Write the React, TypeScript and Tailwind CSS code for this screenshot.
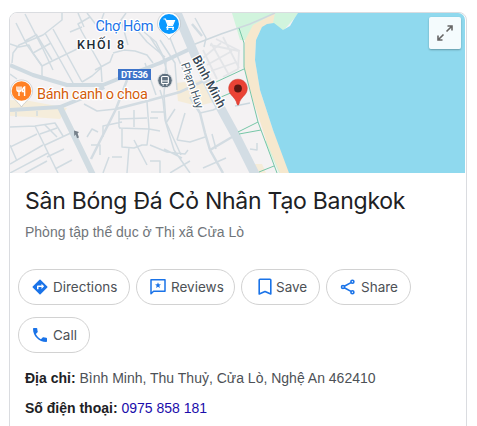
import type { ReactNode } from "react";

const minorRoads = [
  // north west
  "M16 23L27 45L42 66L42 78M25 14L43 49L53 70M36 34L52 60M45 33L73 83M53 29L82 82",
  "M62 13L62 20L43 35L19 45L13 53L12 63M10 44L19 47L29 45L33 53L42 66M33 53L51 43M42 66L77 49M25 41L36 35M10 74L17 79",
  "M90 17L78 24L82 32L101 66L102 82M70 32L82 27M78 13L84 27M95 70L110 62L113 54M82 82L92 76L101 68M87 13L97 26",
  // centre
  "M113 53L124 50L135 51L147 55L153 63M126 13L121 20L128 45M137 30L147 42L165 57M144 32L156 42L166 62L164 95L166 122L181 155M104 13L100 24",
  "M150 37L163 57L170 83M160 40L175 63L177 90M170 38L183 70M145 63L156 95M195 18L206 38L204 47",
  // south west
  "M10 127L35 126L55 123L63 136M35 126L58 173M45 125L57 137M40 134L57 128M45 145L73 132M10 147L37 134M10 164L43 145M25 173L47 161M55 169L72 160M10 145L17 161M47 157L64 149M10 173L48 153M16 112V117M37 111V116",
  // south
  "M84 104L97 111L116 109M119 111V127L122 129V147L134 148L142 145H147L149 129L147 102M119 119L147 118M119 128L149 129L160 131M134 110V127M129 147L127 173M134 140L147 165M87 137L92 129L98 132M103 137V126L122 122M112 157H122M91 145H100V155M109 157L103 173",
  "M151 112H164M150 118H158M166 123L175 109M150 145L167 152L185 154L188 150M164 149L182 158M177 140L185 113M177 140L190 142L205 137M200 113L213 110L222 106M160 90L163 100L165 120L174 150L190 173M212 134L216 149M150 161H160V173M170 173L190 161M203 168L226 158M250 149L257 150V143",
];

const mainRoads = [
  "M127 80L116 109L91 159",
  "M116 109L151 100L180 92L210 78",
  "M190 97L200 113L205 133L210 150L223 173",
  "M210 150L232 137",
  "M192 24L202 36",
];

function RoadMap() {
  return (
    <svg
      viewBox="10 13 455 160"
      className="block h-[160px] w-[455px]"
      fontFamily="Roboto, sans-serif"
    >
      <rect x="10" y="13" width="455" height="160" fill="#f4f2f3" />

      {/* built-up areas */}
      <path d="M10 100L30 101L67 108L60 119L32 117L10 116Z" fill="#f5eddb" />
      <path d="M176 83L209 79L218 101L198 106L178 101Z" fill="#f5ecd9" />
      <path d="M253 164L262 164L266 173H256Z" fill="#f5ecd9" />

      {/* coast */}
      <path d="M232 13H299L283 31L272 24L247 40L240 40Z" fill="#d1f4dd" />
      <path d="M265 141L279 173H284L268 141Z" fill="#d1f4dd" />
      <path
        d="M275 13L253 25L245 40L244 67L253 100L267 143L280 173H291L273 130L260 90L255 60L256 40L262 27L273 23Z"
        fill="#f6e8ce"
      />
      <path
        d="M298 13H465V173H289L273 130L260 90L255 60L256 40L262 27L267 24L274 23L283 30L290 26L294 19Z"
        fill="#8fd9ee"
      />

      {/* streets */}
      <g
        fill="none"
        stroke="#d1dbe1"
        strokeWidth="1.5"
        strokeLinejoin="round"
      >
        {minorRoads.map((d) => (
          <path key={d} d={d} />
        ))}
      </g>
      <g
        fill="none"
        stroke="#d3dce2"
        strokeWidth="2.5"
        strokeLinejoin="round"
      >
        {mainRoads.map((d) => (
          <path key={d} d={d} />
        ))}
      </g>
      <path
        d="M203 58L221 43M207 65L232 51M211 71L237 62M203 50L217 79M211 43L229 75M223 37L239 68M216 39L240 51M210 45L239 51L238 69L223 77"
        fill="none"
        stroke="#e3e5e8"
        strokeWidth="1.8"
      />
      <path
        d="M190 46L221 34L250 24L275 13"
        fill="none"
        stroke="#cdd8de"
        strokeWidth="1.5"
      />
      <path
        d="M10 65L33 75L67 85H103L123 77L160 63L190 49M10 110L60 107L90 95L104 87"
        fill="none"
        stroke="#cfdae1"
        strokeWidth="4"
        strokeLinejoin="round"
      />
      <path
        d="M60 107L80 148L93 175"
        fill="none"
        stroke="#d1dce2"
        strokeWidth="6"
      />
      <path
        d="M175 8L197 60L214 96L236 136L257 178"
        fill="none"
        stroke="#d3dde4"
        strokeWidth="9"
      />
      <g fill="none" stroke="#76c6a7" strokeWidth="1">
        <path d="M239 28L244 43V67L258 122L277 173" />
        <path d="M216 82L244 69M221 97L233 92M238 132L258 122M239 134L261 130M259 172L274 166" />
      </g>
      <path d="M235 106L250 103" stroke="#cad7de" strokeWidth="1.3" />

      {/* one-way arrow */}
      <path
        d="M74 130.5L79 132L77.6 133.6L79 137.6L77 138.2L75.8 134.6L74.3 136Z"
        fill="#75808a"
      />

      {/* labels */}
      <g
        stroke="#fff"
        strokeWidth="2.5"
        strokeLinejoin="round"
        paintOrder="stroke"
      >
        <text x="95.5" y="31" fontSize="14.5" fill="#1a73e8" textLength="58">
          Chợ Hôm
        </text>
        <text
          x="77"
          y="49"
          fontSize="12.5"
          fontWeight="500"
          fill="#202b35"
          textLength="47"
        >
          KHỐI 8
        </text>
        <text x="37" y="98.5" fontSize="14.5" fill="#d45d0b" textLength="111">
          Bánh canh o choa
        </text>
        <text
          transform="translate(192 58.5) rotate(62)"
          fontSize="12.5"
          fontWeight="500"
          fill="#344553"
          textLength="57"
        >
          Bình Minh
        </text>
        <text
          transform="translate(181 64) rotate(71)"
          fontSize="11.5"
          fill="#405466"
          textLength="48"
        >
          Phạm Huy
        </text>
      </g>
      <rect x="118" y="69" width="33" height="11" fill="#3d73c9" />
      <text
        x="121"
        y="78"
        fontSize="9.5"
        fontWeight="700"
        fill="#fff"
        textLength="27"
      >
        DT536
      </text>

      {/* food marker */}
      <path
        d="M21.5 80C15 80 10.5 85 10.5 91C10.5 98 17 100 21.5 107C26 100 32.5 98 32.5 91C32.5 85 28 80 21.5 80Z"
        fill="#fff"
        stroke="#a9afb4"
        strokeWidth=".5"
      />
      <circle cx="21.5" cy="91" r="9.8" fill="#ff8125" />
      <path
        d="M17 86.5V89.5Q17 91.5 19 91.5Q21 91.5 21 89.5V86.5M19 86.5V96M24.6 96V87Q22.4 88 22.4 91.5H24.6"
        fill="none"
        stroke="#fff"
        strokeWidth="1.4"
      />

      {/* market marker */}
      <path
        d="M169 12C162 12 157.5 18 157.5 24C157.5 31 165 33 169 39.5C173 33 180.5 31 180.5 24C180.5 18 176 12 169 12Z"
        fill="#fff"
        stroke="#a9afb4"
        strokeWidth=".5"
      />
      <circle cx="169" cy="24" r="10" fill="#0898ff" />
      <path
        d="M163.5 19H165.5L168 25.5H172.5L174.5 20.5H166.5M168 25.5L167 27.3H174"
        fill="none"
        stroke="#fff"
        strokeWidth="1.2"
      />
      <path d="M166.5 20.5H174.5L172.5 25H168Z" fill="#fff" />
      <circle cx="167.5" cy="29" r="1" fill="#fff" />
      <circle cx="173" cy="29" r="1" fill="#fff" />

      {/* bus stop */}
      <circle cx="165" cy="80.5" r="7.3" fill="#607180" stroke="#e3e7ea" />
      <rect
        x="161.6"
        y="76.5"
        width="6.8"
        height="7"
        rx="1"
        fill="none"
        stroke="#fff"
        strokeWidth="1.1"
      />
      <path
        d="M162 81H168M162.5 85H164M166 85H167.5"
        stroke="#fff"
        strokeWidth="1.2"
      />

      {/* place pin */}
      <path
        d="M238 79.2C232.5 79.2 228.7 83.5 228.7 88.5C228.7 95.5 236 97 237 104.3Q238 106 239 104.3C240 97 247.3 95.5 247.3 88.5C247.3 83.5 243.5 79.2 238 79.2Z"
        fill="#ea4335"
        stroke="#c9362c"
        strokeWidth=".5"
      />
      <circle cx="238" cy="88.5" r="3.9" fill="#5b1712" />
    </svg>
  );
}

function DirectionsIcon() {
  return (
    <svg viewBox="0 0 24 24" className="size-[18px] shrink-0" fill="#1a73e8">
      <path d="M21.71 11.29l-9-9a1 1 0 0 0-1.41 0l-9 9a1 1 0 0 0 0 1.41l9 9c.39.39 1.02.39 1.41 0l9-9a1 1 0 0 0 0-1.41zM14 14.5V12h-4v3H8v-4c0-.55.45-1 1-1h5V7.5l3.5 3.5-3.5 3.5z" />
    </svg>
  );
}

function ReviewsIcon() {
  return (
    <svg viewBox="0 0 16 16" className="size-4 shrink-0" fill="#1a73e8">
      <path
        d="M1 .8H15V12.2H3.6L1 14.7Z"
        fill="none"
        stroke="#1a73e8"
        strokeWidth="1.5"
        strokeLinejoin="round"
      />
      <path d="M8 3.2L8.8 5.3L11 5.4L9.3 6.8L9.9 9L8 7.8L6.1 9L6.7 6.8L5 5.4L7.2 5.3Z" />
    </svg>
  );
}

function SaveIcon() {
  return (
    <svg
      viewBox="0 0 14 18"
      className="h-[18px] w-[14px] shrink-0"
      fill="none"
      stroke="#1a73e8"
      strokeWidth="1.6"
    >
      <path
        d="M1.2 2Q1.2 1.3 2 1.3H12Q12.8 1.3 12.8 2V16L7 13.5L1.2 16Z"
        strokeLinejoin="round"
      />
    </svg>
  );
}

function ShareIcon() {
  return (
    <svg
      viewBox="0 0 16 16"
      className="size-4 shrink-0"
      fill="none"
      stroke="#1a73e8"
      strokeWidth="1.6"
    >
      <path d="M4.3 7.2L11 3.6M4.3 8.7L11 12.4" />
      <circle cx="3" cy="8" r="1.5" />
      <circle cx="12.4" cy="2.8" r="1.5" />
      <circle cx="12.4" cy="13.2" r="1.5" />
    </svg>
  );
}

function CallIcon() {
  return (
    <svg viewBox="3 3 18 18" className="size-[14px] shrink-0" fill="#1a73e8">
      <path d="M6.62 10.79c1.44 2.83 3.76 5.14 6.59 6.59l2.2-2.2c.27-.27.67-.36 1.02-.24 1.12.37 2.33.57 3.57.57.55 0 1 .45 1 1V20c0 .55-.45 1-1 1C10.61 21 3 13.39 3 4c0-.55.45-1 1-1h3.5c.55 0 1 .45 1 1 0 1.25.2 2.45.57 3.57.11.35.03.74-.25 1.02l-2.2 2.2z" />
    </svg>
  );
}

type Action = {
  label: string;
  icon: ReactNode;
  className: string;
};

const actions: Action[] = [
  { label: "Directions", icon: <DirectionsIcon />, className: "w-28 gap-[4px] pl-3" },
  { label: "Reviews", icon: <ReviewsIcon />, className: "w-[99px] gap-[5px] pl-[13px]" },
  { label: "Save", icon: <SaveIcon />, className: "w-[79px] gap-[4px] pl-4" },
  { label: "Share", icon: <ShareIcon />, className: "w-[85px] gap-[5px] pl-[13px]" },
  { label: "Call", icon: <CallIcon />, className: "w-[72px] gap-[6px] pl-[14px]" },
];

export default function App() {
  return (
    <div className="h-[426px] w-[477px] overflow-hidden bg-white pt-3 pl-[9px] font-['Liberation_Sans',sans-serif]">
      <div className="h-[430px] w-[458px] rounded-t-lg border border-[#dadce0] bg-white">
        <div className="relative w-[455px] overflow-hidden rounded-t-[7px]">
          <RoadMap />
          <button
            aria-label="Expand map"
            className="absolute top-1 right-1 flex size-8 items-center justify-center rounded-[2px] bg-white/90 shadow-[0_1px_2px_rgba(0,0,0,0.3)]"
          >
            <svg
              viewBox="0 0 16 16"
              className="size-4"
              fill="none"
              stroke="#666"
              strokeWidth="1.6"
            >
              <path d="M10.5 1H15V5.5M15 1L9.5 6.5M1 10.5V15H5.5M1 15L6.5 9.5" />
            </svg>
          </button>
        </div>

        <h1 className="mt-[11px] pl-[15px] font-['Inter',sans-serif] text-[23px] leading-[34px] tracking-[-0.26px] whitespace-nowrap text-[#202124]">
          Sân Bóng Đá Cỏ Nhân Tạo Bangkok
        </h1>
        <p className="mt-[4px] pl-[15px] text-sm leading-5 whitespace-nowrap text-[#70757a]">
          Phòng tập thể dục ở Thị xã Cửa Lò
        </p>

        <div className="mt-[27px] ml-2 flex flex-wrap gap-x-1.5 gap-y-3">
          {actions.map(({ label, icon, className }) => (
            <button
              key={label}
              className={`flex h-9 items-center rounded-full border border-[#d2d2d2] font-['Inter',sans-serif] text-[13.5px] text-[#4d5156] ${className}`}
            >
              {icon}
              {label}
            </button>
          ))}
        </div>

        <div className="mt-[15px] flex flex-col gap-2.5 pl-[15px] text-sm leading-5 whitespace-nowrap text-[#4d5156]">
          <p>
            <span className="font-bold text-[#202124]">Địa chỉ: </span>
            Bình Minh, Thu Thuỷ, Cửa Lò, Nghệ An 462410
          </p>
          <p>
            <span className="font-bold text-[#202124]">Số điện thoại: </span>
            <a className="text-[#1a0dab]">0975 858 181</a>
          </p>
        </div>
      </div>
    </div>
  );
}
